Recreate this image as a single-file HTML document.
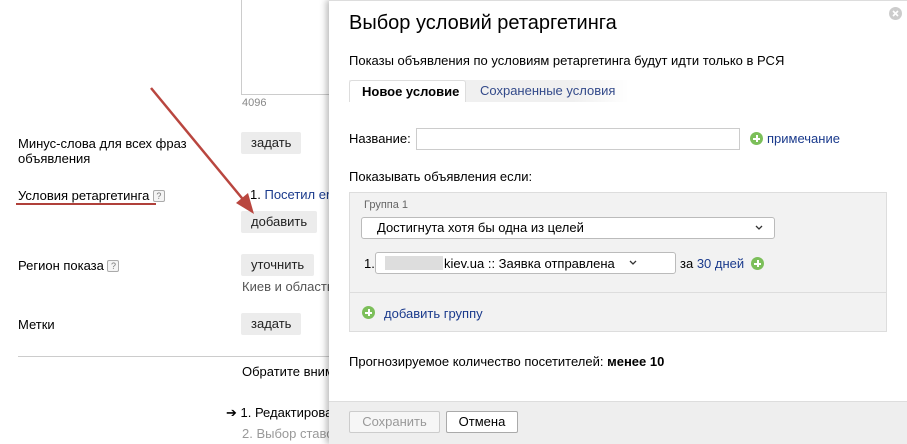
<!DOCTYPE html>
<html><head><meta charset="utf-8"><style>
*{margin:0;padding:0;box-sizing:border-box}
body{width:907px;height:444px;overflow:hidden;background:#fff;font-family:"Liberation Sans",sans-serif;font-size:13px;color:#000;position:relative}
.a{position:absolute;white-space:nowrap}
.btn{position:absolute;background:#ececec;border-radius:2px;font-size:13px;padding:0 10px;height:22px;line-height:22px;color:#222}
.q{display:inline-block;width:12px;height:12px;border:1px solid #aaa;border-radius:2px;font-size:9px;line-height:10px;text-align:center;color:#777;background:#f4f4f4;vertical-align:1px}
.link{color:#1a3a8c}
.plus{position:absolute;width:13px;height:13px;border-radius:50%;background:#7cbf5a}
.plus:before{content:"";position:absolute;left:3px;top:5.5px;width:7px;height:2px;background:#fff}
.plus:after{content:"";position:absolute;left:5.5px;top:3px;width:2px;height:7px;background:#fff}
</style></head><body>
<div class="a" style="left:241px;top:0;width:100px;height:95px;border:1px solid #ccc;border-top:none"></div>
<div class="a" style="left:242px;top:97px;font-size:11px;color:#888">4096</div>
<div class="a" style="left:18px;top:136px;line-height:15px">Минус-слова для всех фраз<br>объявления</div>
<div class="btn" style="left:241px;top:132px">задать</div>
<div class="a" style="left:18px;top:188px">Условия ретаргетинга <span class="q">?</span></div>
<div class="a" style="left:16px;top:203px;width:140px;height:2px;background:#b0403a"></div>
<div class="a" style="left:250px;top:187px">1. <span class="link">Посетил еr</span></div>
<div class="btn" style="left:241px;top:211px">добавить</div>
<div class="a" style="left:18px;top:258px">Регион показа <span class="q">?</span></div>
<div class="btn" style="left:241px;top:254px">уточнить</div>
<div class="a" style="left:242px;top:279px;color:#555">Киев и область</div>
<div class="a" style="left:18px;top:317px">Метки</div>
<div class="btn" style="left:241px;top:313px">задать</div>
<div class="a" style="left:18px;top:356px;width:320px;height:1px;background:#ccc"></div>
<div class="a" style="left:242px;top:364px">Обратите вним</div>
<div class="a" style="left:226px;top:405px">➔ 1. Редактирова</div>
<div class="a" style="left:242px;top:426px;color:#999">2. Выбор ставо</div>
<svg class="a" style="left:0;top:0" width="340" height="444"><line x1="151" y1="88" x2="246" y2="203" stroke="#b9463f" stroke-width="2.5"/><polygon points="254,214 236,203 248,193" fill="#b9463f"/></svg>
<div class="a" style="left:329px;top:0;width:578px;height:444px;background:#fff;box-shadow:-3px 0 6px rgba(0,0,0,.25);border-top:1px solid #ddd"></div>
<svg class="a" style="left:889px;top:7px" width="13" height="13"><circle cx="6.5" cy="6.5" r="6.5" fill="#ccc"/><path d="M4 4L9 9M9 4L4 9" stroke="#fff" stroke-width="1.6"/></svg>
<div class="a" style="left:349px;top:12px;font-size:20px">Выбор условий ретаргетинга</div>
<div class="a" style="left:349px;top:53px">Показы объявления по условиям ретаргетинга будут идти только в РСЯ</div>
<div class="a" style="left:349px;top:80px;width:280px;height:22px;background:linear-gradient(90deg,#f0f0f0,#f0f0f0 80%,#fff)"></div>
<div class="a" style="left:349px;top:80px;width:117px;height:22px;background:#fff;border:1px solid #ddd;border-bottom:none;border-radius:3px 3px 0 0;font-weight:bold;padding:3px 0 0 12px">Новое условие</div>
<div class="a" style="left:480px;top:83px;color:#334a8a">Сохраненные условия</div>
<div class="a" style="left:349px;top:131px">Название:</div>
<div class="a" style="left:416px;top:128px;width:324px;height:22px;border:1px solid #ccc"></div>
<div class="plus" style="left:750px;top:132px"></div>
<div class="a link" style="left:767px;top:131px">примечание</div>
<div class="a" style="left:349px;top:169px">Показывать объявления если:</div>
<div class="a" style="left:349px;top:192px;width:538px;height:140px;background:#f2f2f2;border:1px solid #ddd"></div>
<div class="a" style="left:349px;top:292px;width:538px;height:1px;background:#ddd"></div>
<div class="a" style="left:364px;top:199px;font-size:11px;color:#666">Группа 1</div>
<div class="a" style="left:361px;top:217px;width:414px;height:22px;background:#fff;border:1px solid #bbb;border-radius:3px;padding:2px 0 0 15px">Достигнута хотя бы одна из целей</div>
<svg class="a" style="left:755px;top:225px" width="8" height="6"><path d="M1 1L4 4L7 1" stroke="#333" stroke-width="1.3" fill="none"/></svg>
<div class="a" style="left:364px;top:256px">1.</div>
<div class="a" style="left:375px;top:252px;width:301px;height:22px;background:#fff;border:1px solid #bbb;border-radius:3px"></div>
<div class="a" style="left:385px;top:256px;width:58px;height:14px;background:#ddd"></div>
<div class="a" style="left:444px;top:256px">kiev.ua :: Заявка отправлена</div>
<svg class="a" style="left:629px;top:260px" width="8" height="6"><path d="M1 1L4 4L7 1" stroke="#333" stroke-width="1.3" fill="none"/></svg>
<div class="a" style="left:680px;top:256px">за <span class="link">30 дней</span></div>
<div class="plus" style="left:751px;top:257px"></div>
<div class="plus" style="left:362px;top:306px"></div>
<div class="a link" style="left:384px;top:306px">добавить группу</div>
<div class="a" style="left:349px;top:354px">Прогнозируемое количество посетителей: <b>менее 10</b></div>
<div class="a" style="left:329px;top:401px;width:578px;height:43px;background:#eee;border-top:1px solid #ddd"></div>
<div class="a" style="left:349px;top:411px;width:91px;height:22px;border:1px solid #ccc;border-radius:2px;background:#f6f6f6;color:#999;text-align:center;line-height:20px">Сохранить</div>
<div class="a" style="left:446px;top:411px;width:72px;height:22px;border:1px solid #aaa;border-radius:2px;background:#fff;text-align:center;line-height:20px">Отмена</div>
</body></html>
